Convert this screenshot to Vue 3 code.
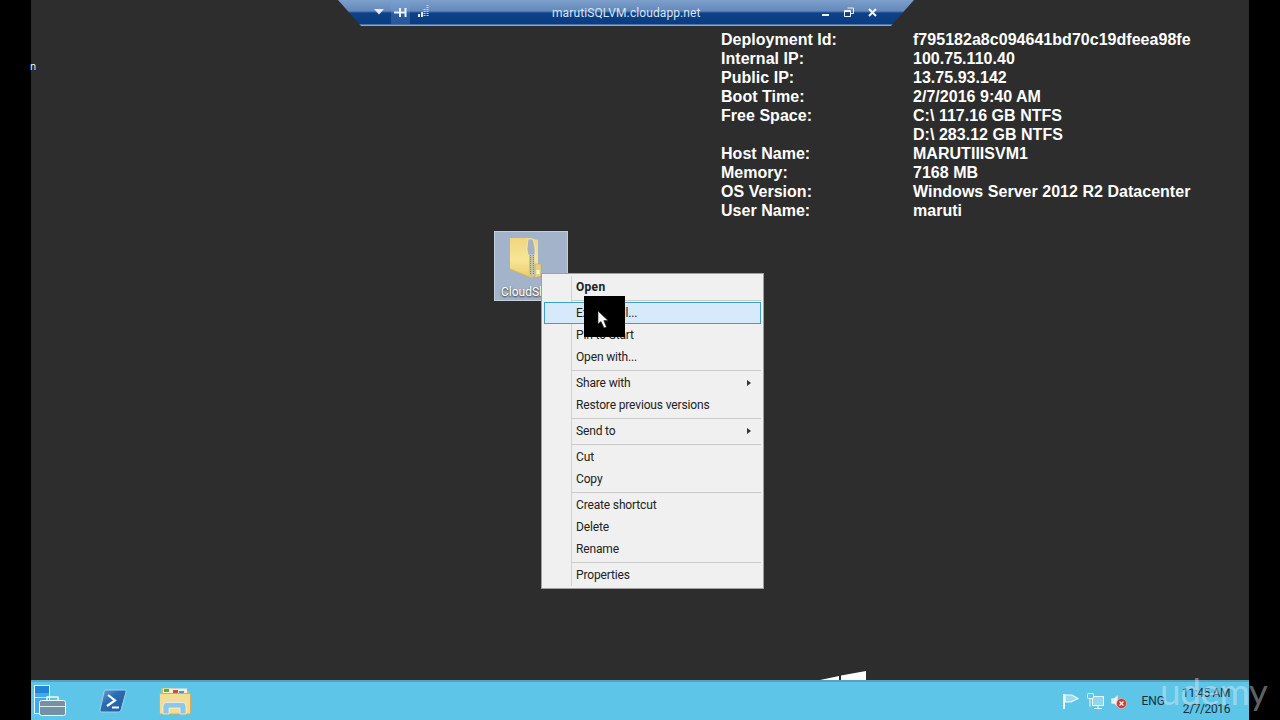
<script setup>
const info = [
  ['Deployment Id:', 'f795182a8c094641bd70c19dfeea98fe'],
  ['Internal IP:', '100.75.110.40'],
  ['Public IP:', '13.75.93.142'],
  ['Boot Time:', '2/7/2016 9:40 AM'],
  ['Free Space:', 'C:\\ 117.16 GB NTFS'],
  ['', 'D:\\ 283.12 GB NTFS'],
  ['Host Name:', 'MARUTIIISVM1'],
  ['Memory:', '7168 MB'],
  ['OS Version:', 'Windows Server 2012 R2 Datacenter'],
  ['User Name:', 'maruti'],
]

// sep = thin divider row, the rest are normal menu rows
const menu = [
  { text: 'Open', bold: true },
  { sep: true },
  { text: 'Extract All...', active: true },
  { text: 'Pin to Start' },
  { text: 'Open with...' },
  { sep: true },
  { text: 'Share with', arrow: true },
  { text: 'Restore previous versions' },
  { sep: true },
  { text: 'Send to', arrow: true },
  { sep: true },
  { text: 'Cut' },
  { text: 'Copy' },
  { sep: true },
  { text: 'Create shortcut' },
  { text: 'Delete' },
  { text: 'Rename' },
  { sep: true },
  { text: 'Properties' },
]
</script>

<template>
  <div class="screen">
    <div class="desktop">
      <main class="wallpaper">
        <span class="stray">n</span>

        <div class="info">
          <template v-for="row in info" :key="row[1]">
            <span>{{ row[0] }}</span>
            <span>{{ row[1] }}</span>
          </template>
        </div>

        <div class="file">
          <svg class="zip" width="32" height="42" viewBox="0 0 32 42">
            <defs>
              <linearGradient id="zipBody" x1="0" y1="0" x2="0" y2="1">
                <stop offset="0" stop-color="#f0d67e" />
                <stop offset="0.55" stop-color="#f8e596" />
                <stop offset="1" stop-color="#eccb68" />
              </linearGradient>
            </defs>
            <path d="M0 1 L20 1 L28 3 L28 36 L22 41 L0 32 Z" fill="url(#zipBody)" />
            <path d="M0 32 L22 41 L28 36" fill="none" stroke="#d9b658" />
            <path d="M18 2 h5 l2 9 v7 h-7 l-1 -6 Z" fill="#a9b2ba" stroke="#eef0f2" stroke-width="0.6" />
            <path d="M19 18 h5 l1 19 -3 3 -3 -1 Z" fill="#c6c2a4" />
            <path d="M20.500 18 V38 M23.500 18 V37" stroke="#85877c" stroke-dasharray="1 1" />
            <path d="M25 27 h6 v12 l-6 2 Z" fill="#e6d283" stroke="#b9a660" stroke-width="0.5" />
            <rect x="26.500" y="33" width="3" height="4" fill="#f6f6ec" />
          </svg>
          <span class="file-name">CloudSl</span>
        </div>

        <ul class="menu">
          <li
            v-for="(item, i) in menu"
            :key="i"
            :class="{ sep: item.sep, bold: item.bold, active: item.active }"
          >
            <template v-if="!item.sep">
              <span>{{ item.text }}</span>
              <i v-if="item.arrow" class="arrow"></i>
            </template>
          </li>
        </ul>

        <div class="cursor-box">
          <svg width="14" height="20" viewBox="0 0 14 20">
            <path d="M1 1 L1 14 L4 11.5 L7 18 L9.5 17 L6.8 10.5 L11 10.5 Z" fill="#fff" stroke="#222" stroke-width="0.6" />
          </svg>
        </div>

        <div class="logo-bits">
          <svg width="48" height="9" viewBox="0 0 48 9">
            <path d="M0 9 L19 5 L19 9 Z M21 9 L21 4.4 L46 0 L46 9 Z" fill="#fff" />
          </svg>
        </div>

        <div class="conn-bar">
          <div class="conn-left">
            <svg width="10" height="6" viewBox="0 0 10 6"><path d="M0 0 H10 L5 5.5 Z" fill="#e6edf6" /></svg>
            <div class="conn-pin">
              <svg width="13" height="9" viewBox="0 0 13 9">
                <path d="M0 4.500 H12 M6 0 V9 M11.500 0 V9" stroke="#eef3fa" stroke-width="2" fill="none" />
              </svg>
            </div>
            <svg class="signal" width="11" height="12" viewBox="0 0 11 12">
              <path d="M0 9 h2 v3 H0 Z M3 7 h2 v5 H3 Z" fill="#e6edf6" />
              <path d="M6.500 4 V12 M9.500 0 V12" stroke="#c8d6e8" stroke-width="2" stroke-dasharray="1 1" />
            </svg>
          </div>
          <span class="conn-title">marutiSQLVM.cloudapp.net</span>
          <div class="conn-right">
            <svg width="9" height="10" viewBox="0 0 9 10"><rect x="1" y="7" width="7" height="2" fill="#eef3fa" /></svg>
            <svg width="10" height="10" viewBox="0 0 10 10">
              <path d="M0.5 3.5 h6 v6 h-6 Z M0.5 4.5 h6 M3.5 1 H9.5 V6.5 H7" stroke="#eef3fa" fill="none" />
            </svg>
            <svg width="9" height="9" viewBox="0 0 9 9"><path d="M1 1 L8 8 M8 1 L1 8" stroke="#f2f5fa" stroke-width="2" /></svg>
          </div>
        </div>
      </main>

      <footer class="taskbar">
        <div class="pinned">
          <svg width="33" height="32" viewBox="0 0 33 32">
            <rect x="0.500" y="0.500" width="15" height="28" fill="#46a8ec" stroke="#e8f6fc" />
            <rect x="1" y="1" width="14" height="7" fill="#1f86d8" />
            <path d="M1 12.500 h14" stroke="#bfe3f7" />
            <rect x="5.500" y="15.500" width="26" height="15" rx="2" fill="#7790a6" stroke="#f2f8fb" />
            <path d="M13 15 v-3 h11 v3" stroke="#f2f8fb" stroke-width="1.400" fill="none" />
            <path d="M6 21.500 h25" stroke="#dfe9ef" />
          </svg>
          <svg width="28" height="24" viewBox="0 0 28 24">
            <defs>
              <linearGradient id="psBody" x1="0" y1="0" x2="1" y2="1">
                <stop offset="0" stop-color="#6fa6d8" />
                <stop offset="0.4" stop-color="#2a6db3" />
                <stop offset="1" stop-color="#1d5c9f" />
              </linearGradient>
            </defs>
            <path d="M6 1 H26 Q27.500 1 27 3 L22 21 Q21.500 23 19.500 23 H2 Q0.500 23 1 21 L5 3 Q5.300 1 6 1 Z" fill="url(#psBody)" stroke="#a6d0e6" />
            <path d="M9 6 L16 11.500 L8 17" stroke="#fff" stroke-width="2.200" fill="none" />
            <path d="M13 18.500 H20" stroke="#fff" stroke-width="2" />
          </svg>
          <svg width="32" height="28" viewBox="0 0 32 28">
            <path d="M2 1 H13 L15 4 H30 V8 H2 Z" fill="#d9bb62" />
            <rect x="4" y="1.500" width="24" height="6" fill="#f3efd8" />
            <rect x="5" y="2" width="5" height="3" fill="#4caf50" />
            <rect x="14" y="3" width="5" height="3" fill="#c8503c" />
            <rect x="20" y="4" width="5" height="3" fill="#4a9bd4" />
            <rect x="0.500" y="6.500" width="31" height="20.500" rx="1" fill="#f3dc93" stroke="#cfae56" />
            <path d="M4 27 V19 Q4 15.500 7 15.500 H24 Q27 15.500 27 19 V27 H21 V21 H10 V27 Z" fill="#8fc6e6" stroke="#f4f8fb" stroke-width="0.7" />
          </svg>
        </div>

        <div class="tray">
          <svg width="16" height="15" viewBox="0 0 16 15">
            <path d="M1 0 V15" stroke="#f2fbfe" stroke-width="2" />
            <path d="M2 1 H9 L15 4.500 L8 8 H2 Z" fill="#9adcf1" stroke="#f2fbfe" stroke-width="1.200" />
          </svg>
          <svg width="17" height="16" viewBox="0 0 17 16">
            <rect x="5.500" y="3.500" width="11" height="9" fill="#8fd6ee" stroke="#f2fbfe" />
            <rect x="0.500" y="0.500" width="6" height="5" rx="1" fill="#5cc5e8" stroke="#f2fbfe" />
            <path d="M3 5.500 V13.500 M11 12.500 V15 M7 15.500 H15" stroke="#f2fbfe" fill="none" />
          </svg>
          <svg class="speaker" width="17" height="15" viewBox="0 0 17 15">
            <path d="M1 4 H4 L8 0.500 V13 L4 10 H1 Z" fill="#e2f5fb" stroke="#8ea9b5" stroke-width="0.600" />
            <circle cx="11.500" cy="9.500" r="5" fill="#d8352a" stroke="#f5d0cc" stroke-width="0.600" />
            <path d="M9.500 7.500 L13.500 11.500 M13.500 7.500 L9.500 11.500" stroke="#fff" stroke-width="1.400" />
          </svg>
          <span class="lang">ENG</span>
          <div class="clock">
            <span>11:45 AM</span>
            <span>2/7/2016</span>
          </div>
        </div>
      </footer>
    </div>

    <span class="watermark">udemy</span>
  </div>
</template>

<style>
html,
body {
  margin: 0;
  background: #000;
}
</style>

<style scoped>
.screen {
  position: relative;
  width: 1280px;
  height: 720px;
  overflow: hidden;
  background: #000;
}

.desktop {
  width: 1218px;
  height: 720px;
  margin-left: 31px;
  display: flex;
  flex-direction: column;
}

.wallpaper {
  position: relative;
  flex: 1;
  background: #2d2d2d;
}

.stray {
  position: absolute;
  left: -1px;
  top: 59px;
  font: 10px "Open Sans", sans-serif;
  color: #fff;
}

.info {
  position: absolute;
  left: 690px;
  top: 30px;
  display: grid;
  grid-template-columns: 192px auto;
  grid-auto-rows: 19px;
  font: bold 16px/19px "Liberation Sans", Arial, sans-serif;
  color: #fff;
  letter-spacing: 0.03px;
  white-space: nowrap;
}

.file {
  position: absolute;
  left: 463px;
  top: 231px;
  width: 74px;
  height: 70px;
  box-sizing: border-box;
  background: #a3b3c9;
  border: 1px solid #c3cedd;
  display: flex;
  flex-direction: column;
  padding-top: 5px;
}

.zip {
  margin-left: 15px;
}

.file-name {
  margin: 5px 0 0 6px;
  font: 12px/16px Roboto, sans-serif;
  color: #fff;
  text-shadow: 0 1px 2px #222;
}

.menu {
  position: absolute;
  left: 510px;
  top: 273px;
  width: 223px;
  height: 316px;
  box-sizing: border-box;
  margin: 0;
  padding: 2px;
  list-style: none;
  background: #f0f0f0;
  border: 1px solid #a0a0a0;
  font: 12px/22px Roboto, sans-serif;
  letter-spacing: -0.15px;
  color: #222;
}

.menu::before {
  content: "";
  position: absolute;
  left: 29px;
  top: 2px;
  bottom: 2px;
  width: 1px;
  background: #d0d0d0;
}

.menu li {
  position: relative;
  height: 22px;
  padding-left: 32px;
  display: flex;
  align-items: center;
  justify-content: space-between;
  box-sizing: border-box;
}

.menu li.sep {
  height: 4px;
  margin-left: 28px;
  padding: 0;
}

.menu li.sep::after {
  content: "";
  flex: 1;
  height: 1px;
  background: #cbcbcb;
}

.menu li.bold {
  font-weight: 700;
  letter-spacing: 0.3px;
}

.menu li.active {
  background: #d7eafc;
  border: 1px solid #3f9fc9;
  padding-left: 31px;
}

.arrow {
  width: 0;
  height: 0;
  margin-right: 10px;
  border-left: 4px solid #333;
  border-top: 3.5px solid transparent;
  border-bottom: 3.5px solid transparent;
}

.cursor-box {
  position: absolute;
  left: 553px;
  top: 296px;
  width: 41px;
  height: 41px;
  background: #000;
  padding: 14px 0 0 13px;
  box-sizing: border-box;
}

.logo-bits {
  position: absolute;
  left: 789px;
  bottom: 0;
  height: 9px;
  line-height: 0;
}

.conn-bar {
  position: absolute;
  left: 307px;
  top: 0;
  width: 576px;
  height: 26px;
  display: flex;
  align-items: center;
  justify-content: space-between;
  padding: 0 37px 2px 36px;
  box-sizing: border-box;
  background: linear-gradient(#7d9fcb 0, #6389bb 11px, #0f4189 13px, #0a3c80 24px, #8eaacb 25px);
  clip-path: polygon(0 0, 100% 0, 96% 100%, 4% 100%);
}

.conn-left {
  display: flex;
  align-items: center;
  gap: 7px;
}

.conn-pin {
  width: 19px;
  height: 24px;
  display: flex;
  align-items: center;
  justify-content: center;
  background: rgba(120, 160, 220, 0.28);
}

.signal {
  margin-left: 1px;
  margin-bottom: 2px;
}

.conn-title {
  position: absolute;
  left: 214px;
  top: 5px;
  font: 12px/16px Roboto, sans-serif;
  letter-spacing: 0.1px;
  color: #dbe5f2;
  white-space: nowrap;
}

.conn-right {
  display: flex;
  align-items: center;
  gap: 14px;
}

.taskbar {
  height: 40px;
  box-sizing: border-box;
  display: flex;
  align-items: center;
  justify-content: space-between;
  background: #5cc5e8;
  border-top: 2px solid #55a4bf;
  padding: 0 19px 0 3px;
}

.pinned {
  display: flex;
  align-items: center;
  gap: 32px;
}

.tray {
  display: flex;
  align-items: center;
  gap: 8px;
  color: #1a2f3a;
  font: 12px/16px Roboto, sans-serif;
}

.speaker {
  margin-left: -2px;
}

.lang {
  margin: 0 9px 0 6px;
}

.clock {
  display: flex;
  flex-direction: column;
  align-items: flex-end;
  letter-spacing: -0.4px;
}

.watermark {
  position: absolute;
  left: 1160px;
  top: 666px;
  font: 37px/50px Lato, sans-serif;
  color: rgba(235, 240, 245, 0.42);
  letter-spacing: -0.5px;
}
</style>
